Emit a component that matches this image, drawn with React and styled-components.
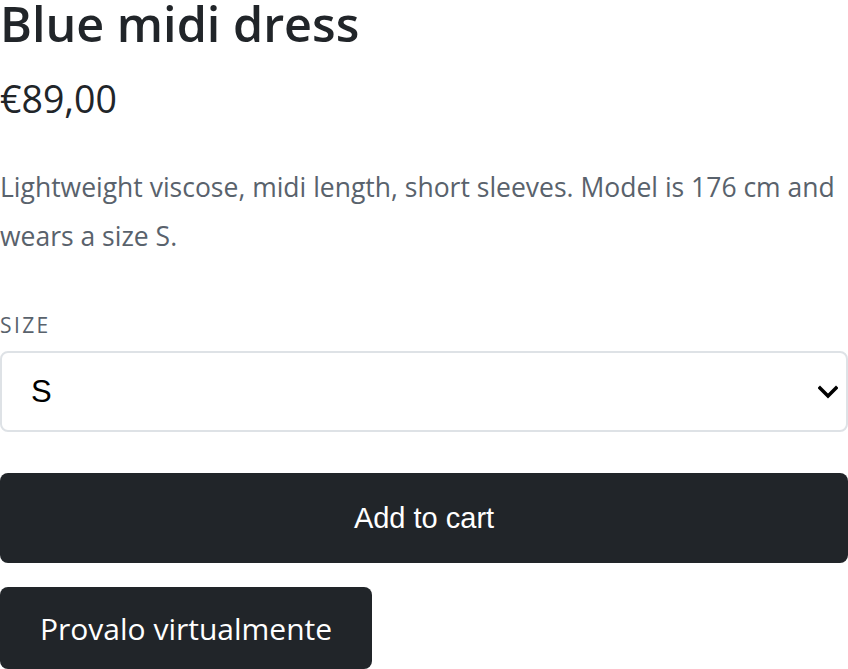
import React from 'react'
import styled, { createGlobalStyle } from 'styled-components'

const GlobalStyle = createGlobalStyle`
  html, body {
    margin: 0;
    padding: 0;
    background: #fff;
  }
  body {
    font-family: "Open Sans", "Noto Sans", sans-serif;
    color: #212529;
  }
`

const Page = styled.div`
  width: 848px;
  display: flex;
  flex-direction: column;
  align-items: flex-start;
`

const Title = styled.h1`
  margin: -6px 0 0;
  font-size: 48.5px;
  font-weight: 600;
  line-height: 1.2;
  color: #212529;
`

const Price = styled.div`
  margin-top: 24px;
  font-size: 37.5px;
  line-height: 1.2;
  color: #212529;
`

const Description = styled.p`
  margin: 42px 0 0;
  font-size: 26.5px;
  line-height: 49px;
  color: #59626c;
`

const Label = styled.label`
  margin-top: 50px;
  font-size: 21px;
  letter-spacing: 2.4px;
  text-transform: uppercase;
  color: #59626c;
`

const SelectWrap = styled.div`
  position: relative;
  width: 100%;
  margin-top: 12px;
`

const Select = styled.select`
  appearance: none;
  display: block;
  width: 100%;
  height: 81px;
  box-sizing: border-box;
  padding: 0 60px 0 29px;
  border: 2px solid #dee2e6;
  border-radius: 8px;
  background: #fff;
  font-family: "Liberation Sans", Arial, sans-serif;
  font-size: 31px;
  color: #000;
`

const Chevron = styled.svg`
  position: absolute;
  right: 10px;
  top: 50%;
  transform: translateY(-50%);
  pointer-events: none;
`

const Button = styled.button`
  display: block;
  box-sizing: border-box;
  width: ${p => (p.$block ? '100%' : 'auto')};
  height: ${p => (p.$block ? '90px' : '82px')};
  margin-top: ${p => (p.$block ? '41px' : '24px')};
  padding: 0 40px;
  border: none;
  border-radius: 8px;
  background: #212529;
  color: #fff;
  font-family: ${p => (p.$block ? '"Liberation Sans", Arial, sans-serif' : '"Open Sans", "Noto Sans", sans-serif')};
  font-size: ${p => (p.$block ? '29px' : '30px')};
  cursor: pointer;
`

export default function App() {
  return (
    <>
      <GlobalStyle />
      <Page>
        <Title>Blue midi dress</Title>
        <Price>€89,00</Price>
        <Description>
          Lightweight viscose, midi length, short sleeves. Model is 176 cm and wears a size S.
        </Description>
        <Label htmlFor="size">Size</Label>
        <SelectWrap>
          <Select id="size" defaultValue="S">
            <option>XS</option>
            <option>S</option>
            <option>M</option>
            <option>L</option>
          </Select>
          <Chevron width="20" height="14" viewBox="0 0 20 14">
            <path d="M2 3l8 8 8-8" fill="none" stroke="#000" strokeWidth="3.4" strokeLinecap="square" />
          </Chevron>
        </SelectWrap>
        <Button $block>Add to cart</Button>
        <Button>Provalo virtualmente</Button>
      </Page>
    </>
  )
}
